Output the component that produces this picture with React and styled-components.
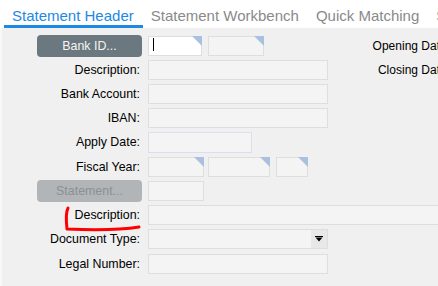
import styled, { createGlobalStyle } from 'styled-components'

const GlobalStyle = createGlobalStyle`
    html, body {
        margin: 0;
        padding: 0;
        overflow: hidden;
        background: #f0f0f0;
    }
    body {
        font-family: "Liberation Sans", Arial, sans-serif;
    }
`

const Page = styled.div`
    position: relative;
    width: 438px;
    height: 286px;
    overflow: hidden;
    background: #f0f0f0;
`

const TabBar = styled.div`
    display: flex;
    height: 28px;
    padding-left: 4px;
    background: #ffffff;
    white-space: nowrap;
`

const Tab = styled.div`
    box-sizing: border-box;
    height: 28px;
    padding: 7px 9px 0 8px;
    font-size: 15px;
    line-height: 17px;
    color: ${p => (p.$active ? '#1e88e5' : '#8a8a8a')};
    border-bottom: 3px solid ${p => (p.$active ? '#1e88e5' : 'transparent')};
`

const Form = styled.div`
    display: flex;
    flex-direction: column;
    width: 600px;
    height: 258px;
    padding-top: 6px;
    box-sizing: border-box;
    box-shadow: inset 2px 0 #f8f8f8;
`

const Row = styled.div`
    display: flex;
    align-items: center;
    height: 24px;
    margin-top: ${p => p.$shift || 0}px;
`

const Label = styled.div`
    flex: 0 0 140px;
    margin-right: 8px;
    text-align: right;
    font-size: 12.4px;
    color: #000;
`

const ActionButton = styled.div`
    box-sizing: border-box;
    flex: 0 0 105px;
    height: 22px;
    margin: 0 6px 0 37px;
    border-radius: 4px;
    display: flex;
    align-items: center;
    justify-content: center;
    font-size: 12.4px;
    background: ${p => (p.$disabled ? '#b1b5b8' : '#6b787f')};
    color: ${p => (p.$disabled ? '#8b9094' : '#f4f4f4')};
`

const Fields = styled.div`
    display: flex;
    align-items: center;
    flex: 0 0 ${p => p.$width || 'auto'};
    gap: ${p => p.$gap || 0}px;
`

const Field = styled.div`
    position: relative;
    box-sizing: border-box;
    flex: 0 0 ${p => p.$w}px;
    height: ${p => p.$h || 20}px;
    margin-right: ${p => p.$mr || 0}px;
    background: ${p => (p.$focused ? '#ffffff' : '#f4f4f4')};
    border: 1px solid ${p => (p.$tint ? '#dcdcf4' : '#dedede')};

    ${p => p.$corner && `
        &::after {
            content: '';
            position: absolute;
            top: -1px;
            right: -1px;
            border-top: 10px solid #a9c0de;
            border-left: 10px solid transparent;
        }
    `}
`

const Caret = styled.span`
    position: absolute;
    left: 4px;
    top: 1px;
    width: 1px;
    height: 13px;
    background: #000;
`

const DropButton = styled.div`
    position: absolute;
    top: 0;
    right: 0;
    bottom: 0;
    width: 16px;
    display: flex;
    align-items: center;
    justify-content: center;
    background: #e8e8e8;
`

const RightLabel = styled.div`
    flex: 0 0 85px;
    text-align: right;
    font-size: 12px;
    color: #000;
    white-space: nowrap;
`

const Annotation = styled.svg`
    position: absolute;
    left: 0;
    top: 0;
    pointer-events: none;
`

export default function App() {
    return (
        <>
            <GlobalStyle />
            <Page>
                <TabBar>
                    <Tab $active>Statement Header</Tab>
                    <Tab>Statement Workbench</Tab>
                    <Tab>Quick Matching</Tab>
                    <Tab>Statement Lines</Tab>
                </TabBar>
                <Form>
                    <Row>
                        <ActionButton>Bank ID...</ActionButton>
                        <Fields $width="217px" $gap={6}>
                            <Field $w={54} $focused $corner><Caret /></Field>
                            <Field $w={56} $corner />
                        </Fields>
                        <RightLabel>Opening Date:</RightLabel>
                    </Row>
                    <Row>
                        <Label>Description:</Label>
                        <Fields $width="217px">
                            <Field $w={180} />
                        </Fields>
                        <RightLabel>Closing Date:</RightLabel>
                    </Row>
                    <Row>
                        <Label>Bank Account:</Label>
                        <Field $w={180} />
                    </Row>
                    <Row>
                        <Label>IBAN:</Label>
                        <Field $w={180} />
                    </Row>
                    <Row>
                        <Label>Apply Date:</Label>
                        <Field $w={104} $h={21} $tint />
                    </Row>
                    <Row $shift={1}>
                        <Label>Fiscal Year:</Label>
                        <Field $w={56} $mr={4} $corner />
                        <Field $w={62} $mr={6} $corner />
                        <Field $w={32} $corner />
                    </Row>
                    <Row>
                        <ActionButton $disabled>Statement...</ActionButton>
                        <Field $w={56} />
                    </Row>
                    <Row>
                        <Label>Description:</Label>
                        <Field $w={320} />
                    </Row>
                    <Row>
                        <Label>Document Type:</Label>
                        <Field $w={180}>
                            <DropButton>
                                <svg width="8" height="6" viewBox="0 0 8 6">
                                    <rect x="0" y="0" width="8" height="1" fill="#000" />
                                    <polygon points="0.5,1.5 7.5,1.5 4,5.5" fill="#000" />
                                </svg>
                            </DropButton>
                        </Field>
                    </Row>
                    <Row $shift={1}>
                        <Label>Legal Number:</Label>
                        <Field $w={180} />
                    </Row>
                </Form>
                <Annotation width="438" height="286">
                    <path
                        d="M68 208 C66 212 66 220 67 229 C90 230 120 230 139 227"
                        fill="none"
                        stroke="#ff0000"
                        strokeWidth="3"
                        strokeLinecap="round"
                        strokeLinejoin="round"
                    />
                </Annotation>
            </Page>
        </>
    )
}
